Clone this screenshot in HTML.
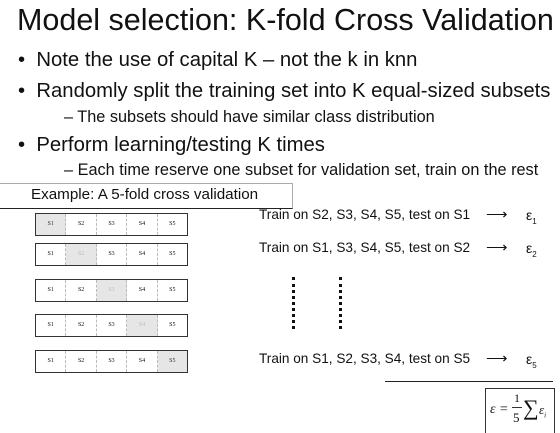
<html><head><style>
body{margin:0;width:560px;height:432px;background:#fff;overflow:hidden;position:relative;font-family:"Liberation Sans",sans-serif;color:#111}
.a{position:absolute;white-space:nowrap}
.row{position:absolute;left:35px;width:151px;height:21px;border:1px solid #333;display:flex}
.row div{flex:1;border-right:1px dashed #bbb;font-family:"Liberation Serif",serif;font-size:6px;text-align:center;line-height:21px}
.row div:last-child{border-right:none}
.row .g{background:#e6e6e6;color:#bbb}
.t{font-size:13.6px}
.dots{position:absolute;width:3px;border-left:3px dotted #111}
.ar{position:absolute;font-size:15px}
.ep{position:absolute;font-size:14px}
</style></head><body>
<div class="a" style="left:17px;top:3px;font-size:30.5px">Model selection: K-fold Cross Validation</div>
<div class="a" style="left:18px;top:49px;font-size:20.3px">•&nbsp;&nbsp;Note the use of capital K – not the k in knn</div>
<div class="a" style="left:18px;top:80px;font-size:20.3px">•&nbsp;&nbsp;Randomly split the training set into K equal-sized subsets</div>
<div class="a" style="left:64px;top:108px;font-size:16.3px">– The subsets should have similar class distribution</div>
<div class="a" style="left:18px;top:134px;font-size:20.3px">•&nbsp;&nbsp;Perform learning/testing K times</div>
<div class="a" style="left:64px;top:161px;font-size:16.3px">– Each time reserve one subset for validation set, train on the rest</div>
<div class="a" style="left:0;top:183px;width:292px;height:24px;border-top:1px solid #aaa;border-bottom:1px solid #222;border-right:1px solid #aaa"></div>
<div class="a" style="left:31px;top:186px;font-size:15.2px">Example: A 5-fold cross validation</div>
<div class="row" style="top:213px"><div class="g" style="color:#333">S1</div><div>S2</div><div>S3</div><div>S4</div><div>S5</div></div>
<div class="row" style="top:243px"><div>S1</div><div class="g">S2</div><div>S3</div><div>S4</div><div>S5</div></div>
<div class="row" style="top:279px"><div>S1</div><div>S2</div><div class="g">S3</div><div>S4</div><div>S5</div></div>
<div class="row" style="top:314px"><div>S1</div><div>S2</div><div>S3</div><div class="g">S4</div><div>S5</div></div>
<div class="row" style="top:350px"><div>S1</div><div>S2</div><div>S3</div><div>S4</div><div class="g" style="color:#333">S5</div></div>
<div class="a t" style="left:259px;top:207px">Train on S2, S3, S4, S5, test on S1</div>
<div class="a t" style="left:259px;top:240px">Train on S1, S3, S4, S5, test on S2</div>
<div class="a t" style="left:259px;top:351px">Train on S1, S2, S3, S4, test on S5</div>
<div class="ar" style="left:486px;top:205px">⟶</div><div class="ep" style="left:526px;top:207px">ε<sub style="font-size:8px">1</sub></div>
<div class="ar" style="left:486px;top:238px">⟶</div><div class="ep" style="left:526px;top:240px">ε<sub style="font-size:8px">2</sub></div>
<div class="ar" style="left:486px;top:349px">⟶</div><div class="ep" style="left:526px;top:351px">ε<sub style="font-size:8px">5</sub></div>
<div class="dots" style="left:292px;top:277px;height:52px"></div>
<div class="dots" style="left:339px;top:277px;height:52px"></div>
<div class="a" style="left:385px;top:381px;width:168px;border-top:1px solid #222"></div>
<div class="a" style="left:485px;top:388px;width:68px;height:44px;border:1px solid #333;border-bottom:none;font-family:'Liberation Serif',serif">
<span class="a" style="left:4px;top:13px;font-size:14px;font-style:italic">ε = </span>
<span class="a" style="left:28px;top:2px;font-size:12px">1</span>
<span class="a" style="left:26px;top:18px;width:10px;border-top:1px solid #333"></span>
<span class="a" style="left:27px;top:21px;font-size:13px">5</span>
<span class="a" style="left:37px;top:6px;font-size:22px">∑</span>
<span class="a" style="left:53px;top:13px;font-size:13px;font-style:italic">ε<sub style="font-size:7px">i</sub></span>
</div>
</body></html>
